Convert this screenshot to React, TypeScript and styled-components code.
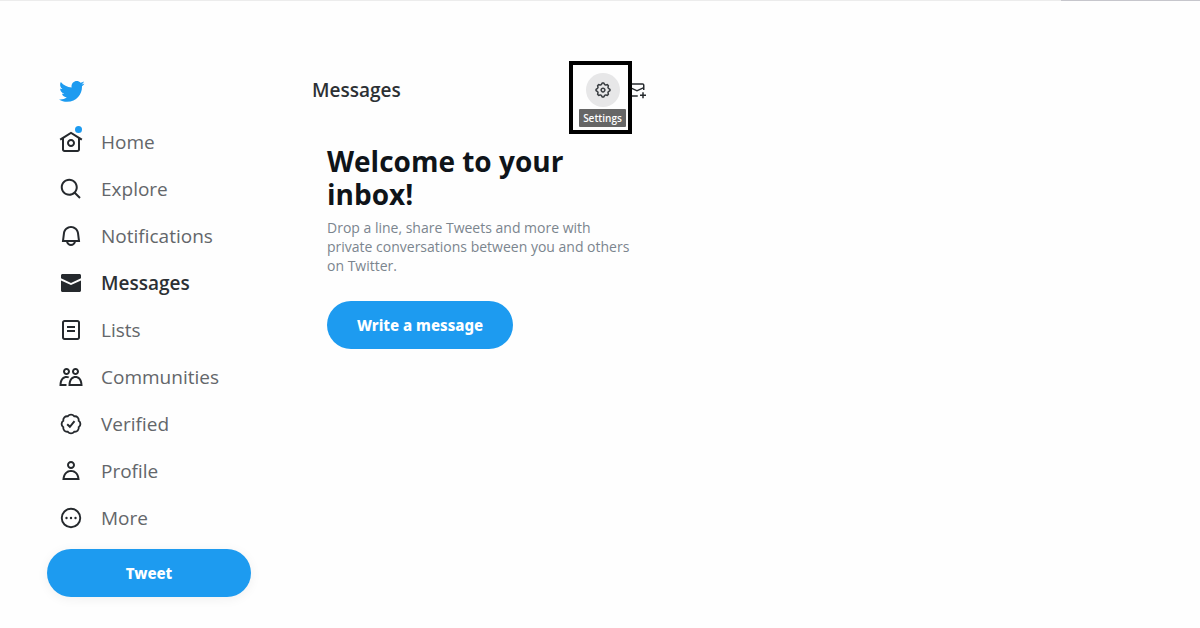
import React from "react";
import styled, { createGlobalStyle } from "styled-components";

const blue = "#1d9bf0";
const ink = "#0f1419";

const GlobalStyle = createGlobalStyle`
  *, *::before, *::after { box-sizing: border-box; }
  body {
    margin: 0;
    background: #fefefe;
    color: ${ink};
    font-family: "Open Sans", "Noto Sans", sans-serif;
  }
  h1, h2, p, ul { margin: 0; padding: 0; }
  button { font: inherit; cursor: pointer; }
`;

const TopRule = styled.div`
  display: flex;
  height: 1px;
  background: #ececec;
  justify-content: flex-end;

  &::after {
    content: "";
    width: 139px;
    background: #c6c6cc;
  }
`;

const Page = styled.div`
  display: flex;
  align-items: flex-start;
  padding: 60px 24px 24px 47px;
`;

const Sidebar = styled.header`
  flex: 0 0 204px;
  display: flex;
  flex-direction: column;
`;

const LogoLink = styled.a`
  display: flex;
  align-items: center;
  height: 57px;
  padding: 4px 0 0 11px;
  color: ${blue};
`;

const NavList = styled.ul`
  list-style: none;
`;

const NavLink = styled.a<{ $active?: boolean }>`
  display: flex;
  align-items: center;
  gap: 18px;
  height: 47px;
  padding-left: 12px;
  color: ${ink};
  font-size: 19px;
  line-height: 24px;
  text-decoration: none;

  span {
    color: ${(p) => (p.$active ? "#2c3034" : "#63666a")};
    font-weight: ${(p) => (p.$active ? 600 : 400)};
  }
`;

const IconSlot = styled.i`
  position: relative;
  display: flex;
  color: #25292d;
`;

const Dot = styled.b`
  position: absolute;
  top: -4px;
  right: 1px;
  width: 7px;
  height: 7px;
  border-radius: 50%;
  background: ${blue};
`;

const Svg = styled.svg<{ $size: number }>`
  display: block;
  flex: none;
  width: ${(p) => p.$size}px;
  height: ${(p) => p.$size}px;
  fill: currentColor;
`;

const PillButton = styled.button<{ $raised?: boolean }>`
  height: 48px;
  padding: 0 30px;
  border: 0;
  border-radius: 24px;
  background: ${blue};
  color: #fff;
  font-family: "Noto Sans", sans-serif;
  font-size: 15px;
  font-weight: 800;
  line-height: 20px;
  white-space: nowrap;
  box-shadow: ${(p) => (p.$raised ? "0 2px 12px rgba(0, 0, 0, 0.06)" : "none")};
`;

const TweetArea = styled.div`
  display: flex;
  flex-direction: column;
  padding-top: 8px;
`;

const Main = styled.main`
  flex: 0 1 334px;
  margin-left: 61px;
`;

const TitleBar = styled.div`
  display: flex;
  align-items: flex-start;
  justify-content: space-between;
`;

const Title = styled.h2`
  color: #2c3034;
  font-size: 19px;
  font-weight: 600;
  line-height: 58px;
`;

const Actions = styled.div`
  display: flex;
  align-items: flex-start;
`;

const Highlight = styled.div`
  position: relative;
  z-index: 1;
  display: flex;
  flex-direction: column;
  align-items: center;
  gap: 2px;
  width: 63px;
  padding: 8px 2px 3px 6px;
  border: 4px solid #000;
  background: #fefefe;
`;

const RoundButton = styled.button`
  display: flex;
  align-items: center;
  justify-content: center;
  width: 34px;
  height: 34px;
  padding: 0;
  border: 0;
  border-radius: 50%;
  background: #e7e7e8;
  color: #3a3e42;
`;

const Tooltip = styled.span`
  width: 47px;
  border-radius: 1px;
  background: #666;
  color: #fff;
  font-size: 10px;
  font-weight: 600;
  line-height: 18px;
  text-align: center;
`;

const ComposeButton = styled.button`
  display: flex;
  align-items: center;
  height: 58px;
  margin-left: -4px;
  padding: 0;
  border: 0;
  background: none;
  color: #25292d;
`;

const Welcome = styled.section`
  padding: 11px 8px 0 15px;
`;

const Heading = styled.h1`
  font-size: 28px;
  font-weight: 700;
  line-height: 33px;
`;

const Blurb = styled.p`
  margin: 7px 0 26px;
  color: #7b858e;
  font-size: 14px;
  line-height: 19px;
`;

const sealPath =
  "M8.52 3.59c.8-1.1 2.04-1.84 3.48-1.84s2.68.74 3.49 1.84c1.34-.21 2.74.14 3.76 1.16s1.37 2.42 1.16 3.77c1.1.8 1.84 2.04 1.84 3.48s-.74 2.68-1.84 3.48c.21 1.34-.14 2.75-1.16 3.77s-2.42 1.37-3.76 1.16c-.8 1.1-2.05 1.84-3.49 1.84s-2.68-.74-3.48-1.84c-1.34.21-2.75-.14-3.77-1.16-1.01-1.02-1.37-2.42-1.16-3.77-1.09-.8-1.84-2.04-1.84-3.48s.75-2.68 1.84-3.48c-.21-1.35.14-2.75 1.16-3.77s2.43-1.37 3.77-1.16z";

const icons = {
  bird: (
    <path d="M23.643 4.937c-.835.37-1.732.62-2.675.733.962-.576 1.7-1.49 2.048-2.578-.9.534-1.897.922-2.958 1.13-.85-.904-2.06-1.47-3.4-1.47-2.572 0-4.658 2.086-4.658 4.66 0 .364.042.718.12 1.06-3.873-.195-7.304-2.05-9.602-4.868-.4.69-.63 1.49-.63 2.342 0 1.616.823 3.043 2.072 3.878-.764-.025-1.482-.234-2.11-.583v.06c0 2.257 1.605 4.14 3.737 4.568-.392.106-.803.162-1.227.162-.3 0-.593-.028-.877-.082.593 1.85 2.313 3.198 4.352 3.234-1.595 1.25-3.604 1.995-5.786 1.995-.376 0-.747-.022-1.112-.065 2.062 1.323 4.51 2.093 7.14 2.093 8.57 0 13.255-7.098 13.255-13.254 0-.2-.005-.402-.014-.602.91-.658 1.7-1.477 2.323-2.41z" />
  ),
  home: (
    <path d="M12 9c-2.209 0-4 1.791-4 4s1.791 4 4 4 4-1.791 4-4-1.791-4-4-4zm0 6c-1.105 0-2-.895-2-2s.895-2 2-2 2 .895 2 2-.895 2-2 2zm0-13.304L.622 8.807l1.06 1.696L3 9.679V19.5C3 20.881 4.119 22 5.5 22h13c1.381 0 2.5-1.119 2.5-2.5V9.679l1.318.824 1.06-1.696L12 1.696zM19 19.5c0 .276-.224.5-.5.5h-13c-.276 0-.5-.224-.5-.5V8.429l7-4.375 7 4.375V19.5z" />
  ),
  search: (
    <path d="M10.25 3.75c-3.59 0-6.5 2.91-6.5 6.5s2.91 6.5 6.5 6.5c1.795 0 3.419-.726 4.596-1.904 1.178-1.177 1.904-2.801 1.904-4.596 0-3.59-2.91-6.5-6.5-6.5zm-8.5 6.5c0-4.694 3.806-8.5 8.5-8.5s8.5 3.806 8.5 8.5c0 1.986-.682 3.815-1.824 5.262l4.781 4.781-1.414 1.414-4.781-4.781c-1.447 1.142-3.276 1.824-5.262 1.824-4.694 0-8.5-3.806-8.5-8.5z" />
  ),
  bell: (
    <path d="M19.993 9.042C19.48 5.017 16.054 2 11.996 2s-7.49 3.021-7.999 7.051L2.866 18H7.1c.463 2.282 2.481 4 4.9 4s4.437-1.718 4.9-4h4.236l-1.143-8.958zM12 20c-1.306 0-2.417-.835-2.829-2h5.658c-.412 1.165-1.523 2-2.829 2zm-6.866-4l.847-6.698C6.364 6.272 8.941 4 11.996 4s5.627 2.268 6.013 5.295L18.864 16H5.134z" />
  ),
  mail: (
    <path d="M1.998 4.499c0-.828.671-1.499 1.5-1.499h17c.828 0 1.5.671 1.5 1.499v2.858l-10 4.545-10-4.547V4.499zm0 5.053V19.5c0 .828.671 1.5 1.5 1.5h17c.828 0 1.5-.672 1.5-1.5V9.554l-10 4.545-10-4.547z" />
  ),
  list: (
    <path d="M3 4.5C3 3.12 4.12 2 5.5 2h13C19.88 2 21 3.12 21 4.5v15c0 1.38-1.12 2.5-2.5 2.5h-13C4.12 22 3 20.88 3 19.5v-15zM5.5 4c-.28 0-.5.22-.5.5v15c0 .28.22.5.5.5h13c.28 0 .5-.22.5-.5v-15c0-.28-.22-.5-.5-.5h-13zM16 10H8V8h8v2zm-8 2h8v2H8v-2z" />
  ),
  people: (
    <path d="M7.501 19.917L7.471 21H.472l.029-1.027c.184-6.618 3.736-8.977 7-8.977.963 0 1.95.212 2.87.672-.444.478-.851 1.03-1.212 1.656-.507-.204-1.054-.329-1.658-.329-2.767 0-4.57 2.223-4.938 6.004H7.56c-.023.302-.05.599-.059.918zm15.998.056L23.528 21H9.472l.029-1.027c.184-6.618 3.736-8.977 7-8.977s6.816 2.358 7 8.977zM21.437 19c-.367-3.781-2.17-6.004-4.938-6.004s-4.57 2.223-4.938 6.004h9.875zm-4.938-9c-.799 0-1.527-.279-2.116-.73-.836-.64-1.384-1.638-1.384-2.77 0-1.93 1.567-3.5 3.5-3.5s3.5 1.57 3.5 3.5c0 1.132-.548 2.13-1.384 2.77-.589.451-1.317.73-2.116.73zm-1.5-3.5c0 .827.673 1.5 1.5 1.5s1.5-.673 1.5-1.5-.673-1.5-1.5-1.5-1.5.673-1.5 1.5zM7.5 3C9.433 3 11 4.57 11 6.5S9.433 10 7.5 10 4 8.43 4 6.5 5.567 3 7.5 3zm0 2C6.673 5 6 5.673 6 6.5S6.673 8 7.5 8 9 7.327 9 6.5 8.327 5 7.5 5z" />
  ),
  verified: (
    <g fill="none" stroke="currentColor" strokeWidth="2">
      <path d={sealPath} transform="translate(1 1) scale(.917)" />
      <path d="M8.2 12.2l2.7 2.6 4.6-5.6" />
    </g>
  ),
  person: (
    <path d="M5.651 19h12.698c-.337-1.8-1.023-3.21-1.945-4.19C15.318 13.65 13.838 13 12 13s-3.317.65-4.404 1.81c-.922.98-1.608 2.39-1.945 4.19zm.486-5.56C7.627 11.85 9.648 11 12 11s4.373.85 5.863 2.44c1.477 1.58 2.366 3.8 2.632 6.46l.11 1.1H3.395l.11-1.1c.266-2.66 1.155-4.88 2.632-6.46zM12 4c-1.105 0-2 .9-2 2s.895 2 2 2 2-.9 2-2-.895-2-2-2zM8 6c0-2.21 1.791-4 4-4s4 1.79 4 4-1.791 4-4 4-4-1.79-4-4z" />
  ),
  more: (
    <g>
      <circle cx="12" cy="12" r="9.25" fill="none" stroke="currentColor" strokeWidth="1.9" />
      <circle cx="7.5" cy="12" r="1.2" />
      <circle cx="12" cy="12" r="1.2" />
      <circle cx="16.5" cy="12" r="1.2" />
    </g>
  ),
  gear: (
    <path d="M10.54 1.75h2.92l1.57 2.36c.11.17.32.25.53.21l2.53-.59 2.17 2.17-.58 2.54c-.05.2.04.41.21.53l2.36 1.57v2.92l-2.36 1.57c-.17.12-.26.33-.21.53l.58 2.54-2.17 2.17-2.53-.59c-.21-.04-.42.04-.53.21l-1.57 2.36h-2.92l-1.58-2.36c-.11-.17-.32-.25-.52-.21l-2.54.59-2.17-2.17.58-2.54c.05-.2-.03-.41-.21-.53l-2.35-1.57v-2.92L4.1 8.97c.18-.12.26-.33.21-.53L3.73 5.9 5.9 3.73l2.54.59c.2.04.41-.04.52-.21l1.58-2.36zm1.07 2l-.98 1.47C10.05 6.08 9 6.5 7.99 6.27l-1.46-.34-.6.6.33 1.46c.24 1.01-.18 2.07-1.05 2.64l-1.46.98v.78l1.46.98c.87.57 1.29 1.63 1.05 2.64l-.33 1.46.6.6 1.46-.34c1.01-.23 2.06.19 2.64 1.05l.98 1.47h.78l.97-1.47c.58-.86 1.63-1.28 2.65-1.05l1.45.34.61-.6-.34-1.46c-.23-1.01.18-2.07 1.05-2.64l1.47-.98v-.78l-1.47-.98c-.87-.57-1.28-1.63-1.05-2.64l.34-1.46-.61-.6-1.45.34c-1.02.23-2.07-.19-2.65-1.05l-.97-1.47h-.78zM12 10.5c-.83 0-1.5.67-1.5 1.5s.67 1.5 1.5 1.5c.82 0 1.5-.67 1.5-1.5s-.68-1.5-1.5-1.5zM8.5 12c0-1.93 1.56-3.5 3.5-3.5 1.93 0 3.5 1.57 3.5 3.5s-1.57 3.5-3.5 3.5c-1.94 0-3.5-1.57-3.5-3.5z" />
  ),
  compose: (
    <path d="M1.998 5.5c0-1.381 1.119-2.5 2.5-2.5h15c1.381 0 2.5 1.119 2.5 2.5V12h-2v-1.537l-8 3.635-8-3.635V18.5c0 .276.224.5.5.5H13v2H4.498c-1.381 0-2.5-1.119-2.5-2.5v-13zm2 2.766l8 3.635 8-3.635V5.5c0-.276-.224-.5-.5-.5h-15c-.276 0-.5.224-.5.5v2.766zM19 18v-3h2v3h3v2h-3v3h-2v-3h-3v-2h3z" />
  ),
};

type IconName = keyof typeof icons;

function Icon({ name, size = 24 }: { name: IconName; size?: number }) {
  return (
    <Svg $size={size} viewBox="0 0 24 24" aria-hidden="true">
      {icons[name]}
    </Svg>
  );
}

const navItems: { label: string; icon: IconName; active?: boolean; unread?: boolean }[] = [
  { label: "Home", icon: "home", unread: true },
  { label: "Explore", icon: "search" },
  { label: "Notifications", icon: "bell" },
  { label: "Messages", icon: "mail", active: true },
  { label: "Lists", icon: "list" },
  { label: "Communities", icon: "people" },
  { label: "Verified", icon: "verified" },
  { label: "Profile", icon: "person" },
  { label: "More", icon: "more" },
];

export default function App() {
  return (
    <>
      <GlobalStyle />
      <TopRule />
      <Page>
        <Sidebar>
          <LogoLink href="#home" aria-label="Twitter">
            <Icon name="bird" size={27} />
          </LogoLink>
          <nav aria-label="Primary">
            <NavList>
              {navItems.map((item) => (
                <li key={item.label}>
                  <NavLink
                    href={`#${item.label.toLowerCase()}`}
                    $active={item.active}
                    aria-current={item.active ? "page" : undefined}
                  >
                    <IconSlot>
                      <Icon name={item.icon} />
                      {item.unread && <Dot />}
                    </IconSlot>
                    <span>{item.label}</span>
                  </NavLink>
                </li>
              ))}
            </NavList>
          </nav>
          <TweetArea>
            <PillButton type="button" $raised>
              Tweet
            </PillButton>
          </TweetArea>
        </Sidebar>
        <Main>
          <TitleBar>
            <Title>Messages</Title>
            <Actions>
              <Highlight>
                <RoundButton type="button" aria-label="Settings" aria-describedby="settings-tip">
                  <Icon name="gear" size={18} />
                </RoundButton>
                <Tooltip role="tooltip" id="settings-tip">
                  Settings
                </Tooltip>
              </Highlight>
              <ComposeButton type="button" aria-label="New message">
                <Icon name="compose" size={18} />
              </ComposeButton>
            </Actions>
          </TitleBar>
          <Welcome>
            <Heading>Welcome to your inbox!</Heading>
            <Blurb>
              Drop a line, share Tweets and more with private conversations between you and others
              on Twitter.
            </Blurb>
            <PillButton type="button">Write a message</PillButton>
          </Welcome>
        </Main>
      </Page>
    </>
  );
}
